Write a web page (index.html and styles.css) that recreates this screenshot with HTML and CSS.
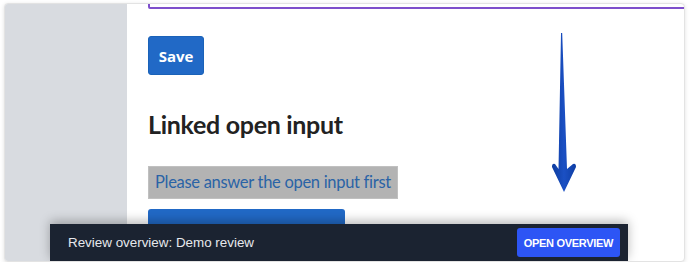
FILE: index.html
```html
<!DOCTYPE html>
<html>
<head>
<meta charset="utf-8">
<link rel="stylesheet" href="styles.css">
</head>
<body>
<div class="card">
  <aside class="sidebar"></aside>
  <main class="main">
    <div class="input-box"></div>
    <button class="btn-save">Save</button>
    <h2 class="heading">Linked open input</h2>
    <div class="notice">Please answer the open input first</div>
    <div class="btn-wide"></div>
  </main>
  <svg class="arrow" width="40" height="170" viewBox="0 0 40 170">
    <defs>
      <linearGradient id="ag" x1="0" y1="0" x2="1" y2="0">
        <stop offset="0" stop-color="#0d3c9e"/>
        <stop offset="0.5" stop-color="#1b50c4"/>
        <stop offset="1" stop-color="#0e3ea4"/>
      </linearGradient>
    </defs>
    <path d="M16 2 L17.2 2 L22 138 L28 133 Q31 132 31 136 L19 161 L7 136 Q7 132 10 133 L13.5 138 Z" fill="url(#ag)"/>
  </svg>
  <div class="review-bar">
    <span class="review-text">Review overview: Demo review</span>
    <button class="btn-open">OPEN OVERVIEW</button>
  </div>
</div>
</body>
</html>
```
FILE: styles.css
```css
html, body {
  margin: 0;
  padding: 0;
  background: #ffffff;
}
.card {
  position: relative;
  margin: 3px 0 0 4px;
  width: 681px;
  height: 259px;
  box-sizing: border-box;
  border: 1px solid #e3e3e3;
  border-radius: 4px;
  box-shadow: 0 1px 4px rgba(0,0,0,0.12);
  display: flex;
  overflow: hidden;
  background: #ffffff;
}
.sidebar {
  width: 122px;
  flex: none;
  background: #d8dbe0;
}
.main {
  flex: 1;
  padding-left: 21px;
  display: flex;
  flex-direction: column;
  align-items: flex-start;
  font-family: Lato, "Open Sans", sans-serif;
}
.input-box {
  margin-top: -40px;
  width: calc(100% + 20px);
  height: 45px;
  box-sizing: border-box;
  border: 2px solid #7e4fcc;
  border-radius: 2px;
  flex: none;
}
.btn-save {
  margin-top: 27px;
  width: 56px;
  height: 39px;
  border: 1px solid #1a62b8;
  border-radius: 3px;
  background: #2169c6;
  color: #ffffff;
  font-family: "Open Sans", sans-serif;
  font-weight: 700;
  font-size: 15px;
  padding: 0;
  flex: none;
}
.heading {
  margin: 34px 0 0 0;
  font-size: 25px;
  line-height: 30px;
  font-weight: 700;
  color: #222222;
  letter-spacing: -0.3px;
}
.notice {
  margin-top: 27px;
  background: #b3b3b3;
  border: 1px solid #c0c0c0;
  color: #2a63a6;
  font-size: 16.5px;
  line-height: 31px;
  padding: 0 6px;
  height: 31px;
  box-sizing: content-box;
  letter-spacing: -0.3px;
}
.btn-wide {
  margin-top: 10px;
  width: 197px;
  height: 40px;
  background: #2169c6;
  border-radius: 3px;
  flex: none;
}
.arrow {
  position: absolute;
  left: 540px;
  top: 27px;
}
.review-bar {
  position: absolute;
  left: 45px;
  bottom: 0;
  width: 578px;
  height: 37px;
  box-sizing: border-box;
  background: #1b2331;
  display: flex;
  align-items: center;
  justify-content: space-between;
  padding: 0 8px 0 18px;
  box-shadow: 0 -3px 10px rgba(0,0,0,0.28);
}
.review-text {
  font-family: "Liberation Sans", Arial, sans-serif;
  font-size: 13.4px;
  color: #e6e8ec;
}
.btn-open {
  width: 103px;
  height: 29px;
  border: none;
  border-radius: 3px;
  background: #2d55f5;
  color: #ffffff;
  font-family: "Liberation Sans", Arial, sans-serif;
  font-weight: 700;
  font-size: 11px;
  letter-spacing: -0.3px;
  padding: 0;
}
```
